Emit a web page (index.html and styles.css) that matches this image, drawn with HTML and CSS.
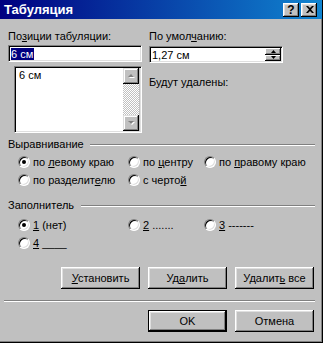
FILE: index.html
```html
<!DOCTYPE html>
<html lang="ru">
<head>
<meta charset="utf-8">
<title>Табуляция</title>
<link rel="stylesheet" href="styles.css">
</head>
<body>
<div class="win">
  <div class="titlebar">
    <span class="title">Табуляция</span>
    <div class="tbtns">
      <span class="tbtn help">?</span>
      <span class="tbtn close"><svg width="8" height="7" viewBox="0 0 8 7"><path d="M0 0h2l2 2 2-2h2L5 3.5 8 7H6L4 5 2 7H0l3-3.5z" fill="#000"/></svg></span>
    </div>
  </div>
  <div class="content">
    <div class="top">
      <div class="col-left">
        <div class="lbl">По<u>з</u>иции табуляции:</div>
        <div class="field edit"><span class="sel">6 см</span></div>
        <div class="listbox">
          <div class="items"><div class="item">6 см</div></div>
          <div class="vscroll">
            <span class="sbtn"><svg width="7" height="5" viewBox="0 0 7 5"><path d="M4 1l3 3H1z" fill="#fff"/><path d="M3 0l3 3H0z" fill="#808080"/></svg></span>
            <span class="track"></span>
            <span class="sbtn"><svg width="7" height="5" viewBox="0 0 7 5"><path d="M1 1h6L4 4z" fill="#fff"/><path d="M0 0h6L3 3z" fill="#808080"/></svg></span>
          </div>
        </div>
      </div>
      <div class="col-right">
        <div class="lbl">По умол<u>ч</u>анию:</div>
        <div class="field spin">
          <span class="spintext">1,27 см</span>
          <div class="spinbtns">
            <span class="spbtn"><svg width="5" height="3" viewBox="0 0 5 3"><path d="M2.5 0L5 3H0z" fill="#000"/></svg></span>
            <span class="spbtn"><svg width="5" height="3" viewBox="0 0 5 3"><path d="M0 0h5L2.5 3z" fill="#000"/></svg></span>
          </div>
        </div>
        <div class="lbl del">Будут удалены:</div>
      </div>
    </div>

    <div class="group g-align">
      <div class="ghead"><span>Выравнивание</span><span class="gline"></span></div>
      <div class="opts">
        <label class="opt"><span class="radio on"></span><span>по <u>л</u>евому краю</span></label>
        <label class="opt"><span class="radio"></span><span>по <u>ц</u>ентру</span></label>
        <label class="opt"><span class="radio"></span><span>по <u>п</u>равому краю</span></label>
        <label class="opt"><span class="radio"></span><span>по разделит<u>е</u>лю</span></label>
        <label class="opt"><span class="radio"></span><span>с черто<u>й</u></span></label>
      </div>
    </div>

    <div class="group g-fill">
      <div class="ghead"><span>Заполнитель</span><span class="gline"></span></div>
      <div class="opts">
        <label class="opt"><span class="radio on"></span><span><u>1</u> (нет)</span></label>
        <label class="opt"><span class="radio"></span><span><u>2</u> .......</span></label>
        <label class="opt"><span class="radio"></span><span><u>3</u> -------</span></label>
        <label class="opt"><span class="radio"></span><span><u>4</u> ____</span></label>
      </div>
    </div>

    <div class="btnrow">
      <span class="btn"><span><u>У</u>становить</span></span>
      <span class="btn"><span>Уд<u>а</u>лить</span></span>
      <span class="btn"><span>Удалит<u>ь</u> все</span></span>
    </div>
    <div class="sep"></div>
    <div class="btnrow bottom">
      <span class="btn default">OK</span>
      <span class="btn">Отмена</span>
    </div>
  </div>
</div>
</body>
</html>
```
FILE: styles.css
```css
* { box-sizing: border-box; }
html, body { margin: 0; padding: 0; }
body {
  width: 323px;
  height: 343px;
  overflow: hidden;
  background: #c0c0c0;
  font-family: "Liberation Sans", Arial, sans-serif;
  font-size: 11px;
  color: #000;
}
u { text-decoration: underline; text-underline-offset: 1px; }

.win {
  width: 323px;
  height: 343px;
  background: #c0c0c0;
  border-right: 1px solid #000;
  border-bottom: 1px solid #000;
  box-shadow: inset -1px -1px #808080;
  display: flex;
  flex-direction: column;
}

.titlebar {
  height: 19px;
  flex: none;
  background: linear-gradient(to right, #000080, #1084d0);
  display: flex;
  align-items: center;
  justify-content: space-between;
  padding: 0 5px 0 4px;
}
.title {
  color: #fff;
  font-weight: bold;
  font-size: 13px;
}
.tbtns { display: flex; gap: 2px; }
.tbtn {
  width: 16px;
  height: 14px;
  background: #c0c0c0;
  box-shadow: inset -1px -1px #000, inset 1px 1px #fff, inset -2px -2px #808080, inset 2px 2px #dfdfdf;
  display: flex;
  align-items: center;
  justify-content: center;
}
.help { font-weight: bold; font-size: 12px; line-height: 14px; padding-top: 1px; }
.close svg { display: block; margin-left: 1px; }

.content {
  flex: 1;
  padding: 0 7px 0 8px;
}

.top { display: flex; padding-top: 11px; }
.col-left { width: 134px; }
.col-right { width: 134px; margin-left: 7px; }
.lbl { line-height: 13px; height: 13px; white-space: nowrap; }

.field {
  background: #fff;
  border: 1px solid;
  border-color: #808080 #fff #fff #808080;
  box-shadow: inset 1px 1px #000, inset -1px -1px #dfdfdf;
}
.edit {
  margin-top: 2px;
  height: 17px;
  padding: 2px 2px 0 2px;
  line-height: 13px;
}
.sel { background: #000080; color: #fff; padding: 0 1px 0 0; }

.listbox {
  margin: 4px 0 0 6px;
  width: 128px;
  height: 67px;
  display: flex;
  border: 1px solid;
  border-color: #808080 #fff #fff #808080;
  box-shadow: inset 1px 1px #000, inset -1px -1px #dfdfdf;
  padding: 1px 2px 1px 1px;
}
.items { flex: 1; background: #fff; padding: 1px 0 0 3px; }
.item { line-height: 13px; }
.vscroll { width: 16px; display: flex; flex-direction: column; }
.sbtn {
  flex: none;
  height: 16px;
  background: #c0c0c0;
  box-shadow: inset -1px -1px #000, inset 1px 1px #dfdfdf, inset -2px -2px #808080, inset 2px 2px #fff;
  display: flex;
  align-items: center;
  justify-content: center;
}
.sbtn svg { display: block; }
.track {
  flex: 1;
  background: repeating-conic-gradient(#fff 0 25%, #c0c0c0 0 50%) 0 0 / 2px 2px;
}

.spin {
  margin-top: 3px;
  height: 17px;
  display: flex;
  align-items: stretch;
  padding: 1px 1px 1px 2px;
}
.spintext { flex: 1; line-height: 13px; padding-top: 1px; }
.spinbtns { width: 16px; display: flex; flex-direction: column; }
.spbtn {
  flex: 1;
  background: #c0c0c0;
  box-shadow: inset -1px -1px #000, inset 1px 1px #fff, inset -2px -2px #808080;
  display: flex;
  align-items: center;
  justify-content: center;
}
.spbtn svg { display: block; }
.del { margin-top: 13px; }

.g-align { margin-top: 5px; }
.g-fill { margin-top: 10px; }
.ghead {
  display: flex;
  align-items: center;
  height: 13px;
  line-height: 13px;
}
.gline {
  flex: 1;
  height: 2px;
  border-top: 1px solid #808080;
  border-bottom: 1px solid #fff;
  margin-left: 6px;
}
.g-fill .gline { margin-left: 7px; }
.opts {
  display: grid;
  grid-template-columns: 110px 76px 1fr;
  grid-auto-rows: 18px;
  padding-left: 10px;
  margin-top: 2px;
}
.g-fill .opts { margin-top: 4px; }
.opt {
  display: flex;
  align-items: center;
  white-space: nowrap;
}
.radio {
  flex: none;
  width: 12px;
  height: 12px;
  border-radius: 50%;
  background: #fff;
  border: 1px solid;
  border-color: #808080 #fff #fff #808080;
  box-shadow: inset 1px 1px #000, inset -1px -1px #dfdfdf;
  margin-right: 3px;
  display: flex;
  align-items: center;
  justify-content: center;
}
.radio.on::after {
  content: "";
  width: 4px;
  height: 4px;
  border-radius: 50%;
  background: #000;
}

.btnrow {
  display: flex;
  justify-content: flex-end;
  gap: 8px;
  margin-top: 15px;
  padding-right: 1px;
}
.btn {
  width: 79px;
  height: 22px;
  background: #c0c0c0;
  box-shadow: inset -1px -1px #000, inset 1px 1px #fff, inset -2px -2px #808080, inset 2px 2px #dfdfdf;
  display: flex;
  align-items: center;
  justify-content: center;
  white-space: nowrap;
}
.btn.default {
  border: 1px solid #000;
}
.sep {
  margin: 11px 0 0 -4px;
  height: 2px;
  border-top: 1px solid #808080;
  border-bottom: 1px solid #fff;
}
.btnrow.bottom { margin-top: 8px; }
```
